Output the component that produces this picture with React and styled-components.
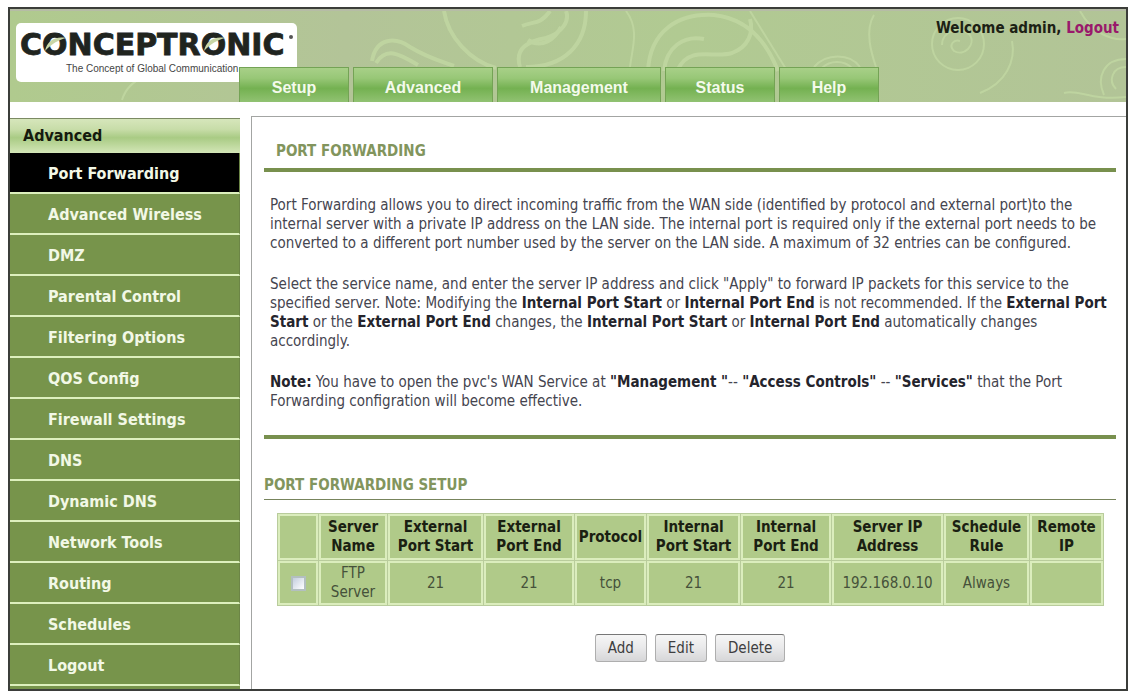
import React from "react";
import styled, { createGlobalStyle } from "styled-components";

const GlobalStyle = createGlobalStyle`
  * {
    box-sizing: border-box;
  }

  body {
    margin: 0;
    padding: 7px 4px 1px 8px;
    background: #fff;
    color: #45454f;
    font-family: "DejaVu Sans Condensed", Tahoma, "DejaVu Sans", sans-serif;
    font-size: 15px;
  }
`;

const Frame = styled.div`
  border: 2px solid #3b3d3a;
  background: #fff;
`;

const Header = styled.header`
  position: relative;
  display: flex;
  height: 93px;
  overflow: hidden;
  background: linear-gradient(90deg, #b0ca8e, #b3c498 30%, #b1ca92 60%, #b2c497);
  border-top: 2px solid #b6bca6;
`;

const Swirls = styled.svg`
  position: absolute;
  top: 0;
  left: 0;
  width: 100%;
  height: 100%;
  fill: none;
  stroke: #c2d8a3;
`;

const LogoBox = styled.div`
  position: relative;
  width: 281px;
  height: 59px;
  margin: 12px 0 0 6px;
  border-radius: 5px;
  background: #fff;
`;

const LogoArt = styled.svg`
  display: block;
  width: 281px;
  height: 59px;
`;

const Tabs = styled.nav`
  position: relative;
  display: flex;
  align-self: flex-end;
  gap: 4px;
  margin-left: -58px;
`;

const Tab = styled.a`
  display: flex;
  align-items: center;
  justify-content: center;
  width: ${(props) => props.$width}px;
  height: 35px;
  padding-top: 6px;
  border: solid #74a355;
  border-width: 1px 1px 0;
  background: linear-gradient(#a8d088, #98c777 30%, #74b151 60%, #91c272);
  color: #f4faec;
  font-family: "Liberation Sans", Arial, sans-serif;
  font-size: 16px;
  font-weight: 700;
  text-decoration: none;
`;

const Welcome = styled.div`
  position: relative;
  margin: 8px 7px 0 auto;
  color: #1c2114;
  font-weight: 700;
  line-height: 19px;
`;

const LogoutLink = styled.a`
  color: #99196b;
  text-decoration: none;
`;

const Columns = styled.div`
  display: flex;
  gap: 11px;
  padding-top: 14px;
`;

const Sidebar = styled.nav`
  flex: 0 0 230px;
  margin-top: 2px;
  padding-bottom: 3px;
  background: #77944b;
`;

const SidebarTitle = styled.h2`
  height: 35px;
  margin: 0;
  padding-left: 13px;
  border-top: 1px solid #7b8a63;
  background: linear-gradient(#d6e6bb, #c8dda9 30%, #a9cb84 55%, #d3e6b7);
  color: #151a0e;
  font-size: 16px;
  line-height: 34px;
`;

const SidebarLink = styled.a`
  display: block;
  height: 41px;
  padding-left: 38px;
  border-right: 1px solid #6c8546;
  border-bottom: 2px solid #ddf0bd;
  background: ${(props) => (props.$active ? "#000" : "#77944b")};
  color: #f2f8e6;
  font-size: 16px;
  font-weight: 700;
  line-height: 42px;
  text-decoration: none;
`;

const Panel = styled.main`
  flex: 1;
  min-width: 0;
  padding: 25px 10px 24px 12px;
  border: solid #a3a5a3;
  border-width: 1px 0 0 1px;
`;

const Title = styled.h1`
  margin: 0;
  padding: 0 0 7px 12px;
  border-bottom: 4px solid #78904e;
  color: #82955d;
  font-size: 15px;
  line-height: 19px;
`;

const Description = styled.div`
  padding: 24px 0 24px 6px;
  border-bottom: 4px solid #78904e;
`;

const Paragraph = styled.p`
  margin: 0 0 22px;
  line-height: 19px;

  &:last-child {
    margin-bottom: 0;
  }

  b {
    color: #24242c;
  }
`;

const SubTitle = styled.h2`
  margin: 37px 0 0;
  padding-bottom: 4px;
  border-bottom: 1px solid #77845c;
  color: #82955d;
  font-size: 15px;
  line-height: 19px;
`;

const TableWrap = styled.div`
  padding: 13px 12px 0 13px;
`;

const Table = styled.table`
  width: 100%;
  table-layout: fixed;
  border-spacing: 1px;
  background: #b9cc9c;
  text-align: center;
`;

const HeadCell = styled.th`
  height: 46px;
  padding: 0;
  border: 2px solid #dbedbd;
  background: #b0ca89;
  color: #1a2012;
  line-height: 19px;
`;

const Cell = styled.td`
  height: 44px;
  padding: 0;
  border: 2px solid #dbedbd;
  background: #b0ca89;
  color: #45513a;
  line-height: 19px;
`;

const Checkbox = styled.input`
  appearance: none;
  width: 15px;
  height: 15px;
  margin: 0;
  border: 2px solid #b3bfc0;
  background: linear-gradient(135deg, #c4cede, #fff);
  vertical-align: middle;

  &:checked {
    background: #6d8a3f;
  }
`;

const Actions = styled.div`
  display: flex;
  justify-content: center;
  gap: 8px;
  margin-top: 28px;
`;

const Button = styled.button`
  min-width: 52px;
  height: 28px;
  padding: 0 12px;
  border: 1px solid #aeaeae;
  border-top-color: #777;
  border-radius: 3px;
  background: linear-gradient(#f6f6f6, #e9e9ea 50%, #d6d6d8);
  color: #3e3e40;
  font-family: inherit;
  font-size: 15px;
`;

const tabs = [
  { name: "Setup", width: 110 },
  { name: "Advanced", width: 140 },
  { name: "Management", width: 164 },
  { name: "Status", width: 110 },
  { name: "Help", width: 100 },
];

const menu = [
  "Port Forwarding",
  "Advanced Wireless",
  "DMZ",
  "Parental Control",
  "Filtering Options",
  "QOS Config",
  "Firewall Settings",
  "DNS",
  "Dynamic DNS",
  "Network Tools",
  "Routing",
  "Schedules",
  "Logout",
];

const columns = [
  { lines: ["Server", "Name"], width: 68 },
  { lines: ["External", "Port Start"], width: 95 },
  { lines: ["External", "Port End"], width: 90 },
  { lines: ["Protocol"], width: 71 },
  { lines: ["Internal", "Port Start"], width: 93 },
  { lines: ["Internal", "Port End"], width: 90 },
  { lines: ["Server IP", "Address"], width: 111 },
  { lines: ["Schedule", "Rule"], width: 85 },
  { lines: ["Remote", "IP"], width: 73 },
];

const servers = [
  ["FTP Server", "21", "21", "tcp", "21", "21", "192.168.0.10", "Always", ""],
];

function Logo() {
  return (
    <LogoBox>
      <LogoArt viewBox="0 0 281 59" role="img" aria-label="Conceptronic">
        <text
          x="4"
          y="32"
          fill="#20241f"
          stroke="#20241f"
          strokeWidth="0.8"
          fontFamily="'DejaVu Sans', Verdana, sans-serif"
          fontSize="30"
          fontWeight="700"
        >
          CONCEPTRONIC
        </text>
        <path d="M29 28C31 18 39 13 50 15C43 17 36 20 29 28Z" fill="#c9d6a6" />
        <path d="M188 28C190 18 198 13 209 15C202 17 195 20 188 28Z" fill="#c9d6a6" />
        <circle cx="275" cy="14" r="2" fill="#555" />
        <text
          x="50"
          y="49"
          fill="#454545"
          fontFamily="'Liberation Sans', Arial, sans-serif"
          fontSize="10"
        >
          The Concept of Global Communication
        </text>
      </LogoArt>
    </LogoBox>
  );
}

function HeaderSwirls() {
  return (
    <Swirls viewBox="0 0 1116 91" preserveAspectRatio="xMinYMin slice" aria-hidden="true">
      <g strokeWidth="4" opacity="0.8">
        <path d="M434 0C438 26 460 50 486 57" />
        <path d="M576 0C576 34 554 56 516 56" />
        <path d="M510 56C504 36 520 30 536 27C552 22 560 10 556 0" />
        <path d="M512 15C524 10 530 14 540 0" />
        <path d="M518 29C532 38 545 28 551 16" />
        <path d="M362 50C366 26 386 26 400 36C416 46 430 50 444 55" />
        <path d="M366 52C376 36 388 42 408 54" />
        <path d="M638 60C640 20 668 2 704 4C740 8 758 34 768 60" />
        <path d="M654 60C656 36 674 24 694 28" />
        <path d="M668 58C680 34 704 48 722 42C738 36 744 22 740 8" />
      </g>
      <g strokeWidth="2" opacity="0.8">
        <path d="M616 0C630 18 622 38 620 56" />
        <path d="M740 0L776 58" />
        <path d="M804 56C816 42 840 42 850 56" />
        <path d="M812 57C820 49 834 49 842 57" />
        <path d="M864 4C854 20 862 44 866 56" />
        <circle cx="948" cy="33" r="26" />
        <path d="M932 34C932 20 950 14 960 24C966 34 954 46 944 40C938 34 944 28 950 30" />
        <path d="M1002 30C1006 50 996 72 970 82" />
        <path d="M1070 0C1082 22 1102 30 1116 28" />
        <path d="M1116 48C1094 48 1086 66 1094 84" />
        <path d="M1116 56C1102 56 1098 70 1106 78" />
        <path d="M1054 82C1070 78 1080 90 1116 86" />
        <path d="M112 89C116 76 124 70 134 66" />
      </g>
    </Swirls>
  );
}

function App() {
  return (
    <>
      <GlobalStyle />
      <Frame>
        <Header>
          <HeaderSwirls />
          <Logo />
          <Tabs>
            {tabs.map((tab) => (
              <Tab key={tab.name} href="#" $width={tab.width}>
                {tab.name}
              </Tab>
            ))}
          </Tabs>
          <Welcome>
            Welcome admin, <LogoutLink href="#">Logout</LogoutLink>
          </Welcome>
        </Header>
        <Columns>
          <Sidebar>
            <SidebarTitle>Advanced</SidebarTitle>
            {menu.map((item, index) => (
              <SidebarLink key={item} href="#" $active={index === 0}>
                {item}
              </SidebarLink>
            ))}
          </Sidebar>
          <Panel>
            <Title>PORT FORWARDING</Title>
            <Description>
              <Paragraph>
                Port Forwarding allows you to direct incoming traffic from the
                WAN side (identified by protocol and external port)to the
                <br />
                internal server with a private IP address on the LAN side. The
                internal port is required only if the external port needs to be
                <br />
                converted to a different port number used by the server on the
                LAN side. A maximum of 32 entries can be configured.
              </Paragraph>
              <Paragraph>
                Select the service name, and enter the server IP address and
                click "Apply" to forward IP packets for this service to the
                <br />
                specified server. Note: Modifying the{" "}
                <b>Internal Port Start</b> or <b>Internal Port End</b> is not
                recommended. If the <b>External Port</b>
                <br />
                <b>Start</b> or the <b>External Port End</b> changes, the{" "}
                <b>Internal Port Start</b> or <b>Internal Port End</b>{" "}
                automatically changes
                <br />
                accordingly.
              </Paragraph>
              <Paragraph>
                <b>Note:</b> You have to open the pvc's WAN Service at{" "}
                <b>"Management "</b>-- <b>"Access Controls"</b> --{" "}
                <b>"Services"</b> that the Port
                <br />
                Forwarding configration will become effective.
              </Paragraph>
            </Description>
            <SubTitle>PORT FORWARDING SETUP</SubTitle>
            <TableWrap>
              <Table>
                <colgroup>
                  <col width={40} />
                  {columns.map((column, index) => (
                    <col key={index} width={column.width} />
                  ))}
                </colgroup>
                <thead>
                  <tr>
                    <HeadCell />
                    {columns.map((column, index) => (
                      <HeadCell key={index}>
                        {column.lines[0]}
                        {column.lines[1] && <br />}
                        {column.lines[1]}
                      </HeadCell>
                    ))}
                  </tr>
                </thead>
                <tbody>
                  {servers.map((server) => (
                    <tr key={server[0]}>
                      <Cell>
                        <Checkbox type="checkbox" aria-label={server[0]} />
                      </Cell>
                      {server.map((value, index) => (
                        <Cell key={index}>{value}</Cell>
                      ))}
                    </tr>
                  ))}
                </tbody>
              </Table>
            </TableWrap>
            <Actions>
              <Button type="button">Add</Button>
              <Button type="button">Edit</Button>
              <Button type="button">Delete</Button>
            </Actions>
          </Panel>
        </Columns>
      </Frame>
    </>
  );
}

export default App;
